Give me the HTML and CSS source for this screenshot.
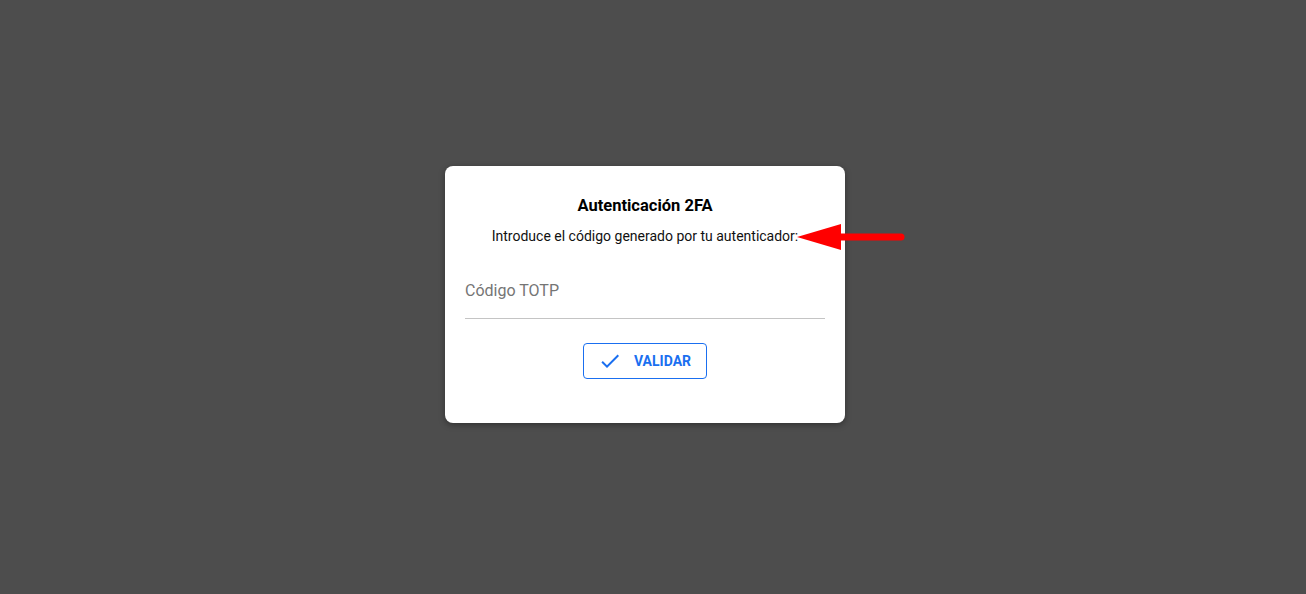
FILE: index.html
```html
<!DOCTYPE html>
<html lang="es">
<head>
    <meta charset="UTF-8">
    <meta name="viewport" content="width=device-width, initial-scale=1.0">
    <title>Autenticación 2FA</title>
    <link rel="stylesheet" href="styles.css">
</head>
<body>
    <div class="overlay">
        <div class="dialog">
            <h2 class="dialog-title">Autenticación 2FA</h2>
            <p class="dialog-text">Introduce el código generado por tu autenticador:</p>
            <div class="field">
                <input type="text" class="field-input" placeholder="Código TOTP">
            </div>
            <div class="actions">
                <button class="btn-outline">
                    <svg class="btn-icon" viewBox="0 0 24 24" width="24" height="24">
                        <path d="M9 16.17 4.83 12l-1.42 1.41L9 19 21 7l-1.41-1.41z" fill="currentColor"/>
                    </svg>
                    <span>VALIDAR</span>
                </button>
            </div>
            <!-- annotation arrow -->
            <svg class="arrow" viewBox="0 0 110 32" width="110" height="32">
                <line x1="44" y1="15" x2="104" y2="15" stroke="#ff0000" stroke-width="7" stroke-linecap="round"/>
                <polygon points="0,15 44,2 44,28" fill="#ff0000"/>
            </svg>
        </div>
    </div>
</body>
</html>
```

FILE: styles.css
```css
html, body {
    margin: 0;
    height: 100%;
}
body {
    font-family: Roboto, "Liberation Sans", Arial, sans-serif;
    background-color: #4d4d4d; /* dimmed backdrop */
}
.overlay {
    display: flex;
    justify-content: center;
    align-items: flex-start;
    padding: 166px 16px 0 0;
}
.dialog {
    position: relative;
    width: 400px;
    box-sizing: border-box;
    padding: 28px 20px 44px;
    background-color: #ffffff;
    border-radius: 8px;
    box-shadow: 0 2px 6px rgba(0,0,0,0.35);
    text-align: center;
}
.dialog-title {
    margin: 0;
    font-size: 16.5px;
    line-height: 24px;
    font-weight: 700;
    color: #000;
}
.dialog-text {
    margin: 8px 0 0;
    font-size: 14px;
    line-height: 20px;
    color: #111;
}
.field {
    margin-top: 22px;
    border-bottom: 1px solid #c4c4c4;
}
.field-input {
    display: block;
    width: 100%;
    box-sizing: border-box;
    border: none;
    outline: none;
    padding: 12px 0 16px;
    font-family: inherit;
    font-size: 16px;
    line-height: 22px;
    color: #333;
    background: transparent;
}
.field-input::placeholder {
    color: #757575;
}
.actions {
    display: flex;
    justify-content: center;
    margin-top: 24px;
}
.btn-outline {
    display: flex;
    align-items: center;
    gap: 12px;
    height: 36px;
    box-sizing: border-box;
    padding: 0 15px 0 14px;
    border: 1px solid #1a6ff0;
    border-radius: 4px;
    background: #fff;
    color: #1a6ff0;
    font-family: inherit;
    font-size: 14px;
    font-weight: 700;
    letter-spacing: 0;
    cursor: pointer;
}
.btn-icon {
    display: block;
}
.arrow {
    position: absolute;
    left: 352px;
    top: 56px;
}
```
